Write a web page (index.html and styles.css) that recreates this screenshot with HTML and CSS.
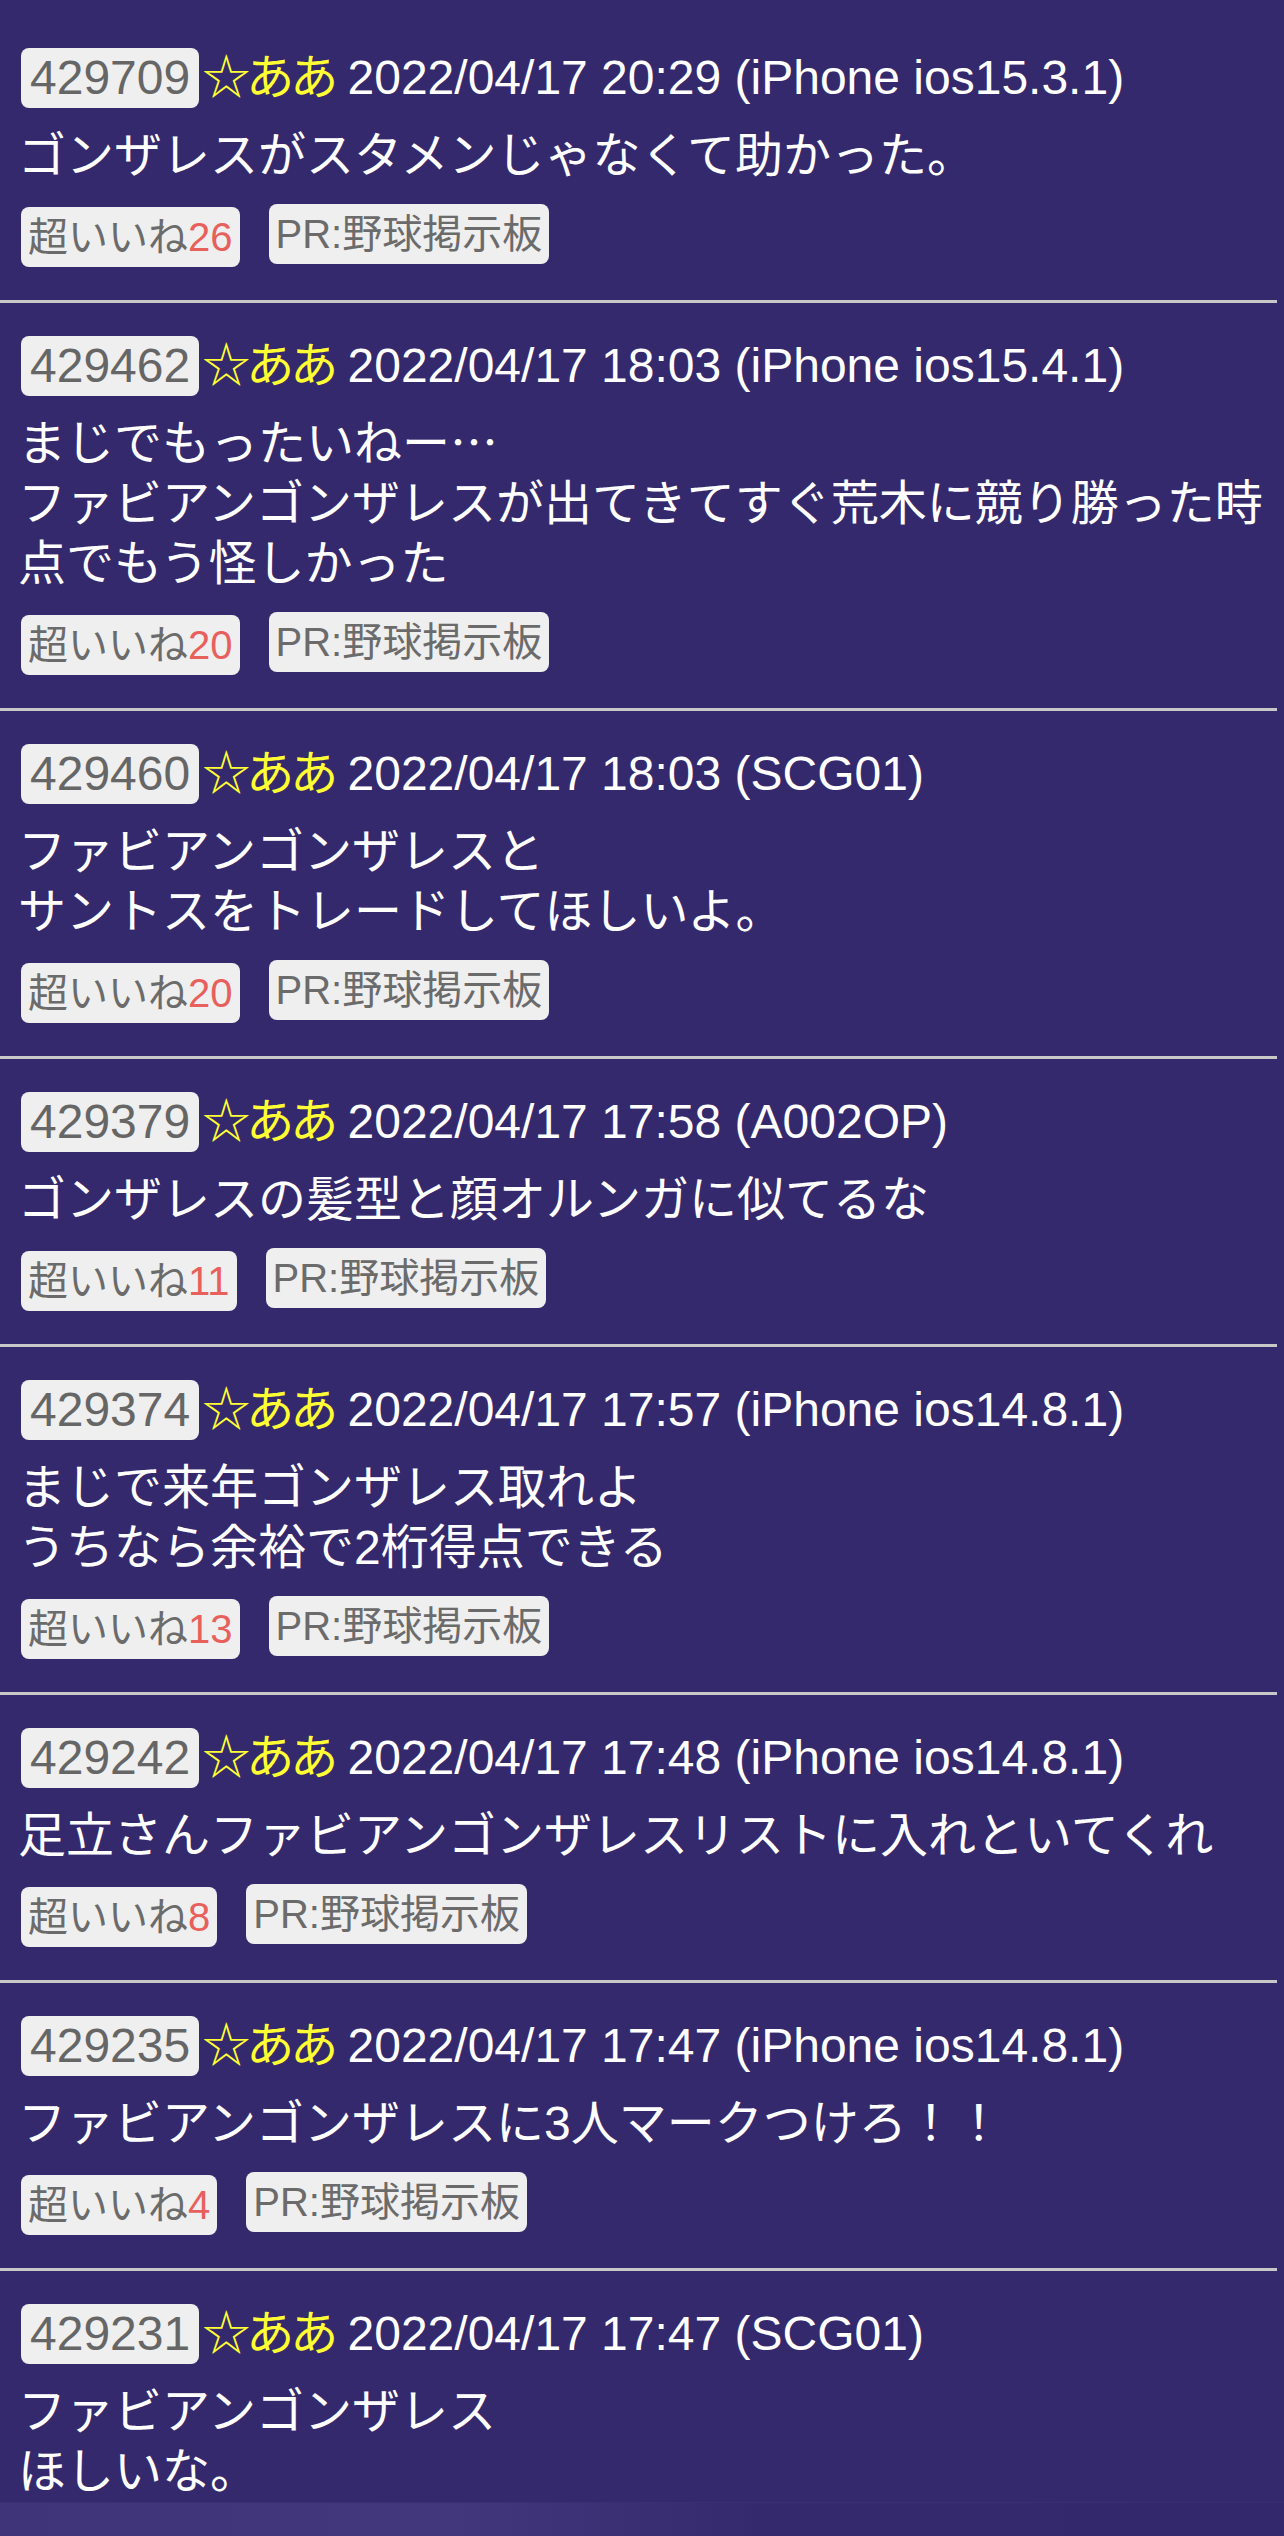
FILE: index.html
```html
<!DOCTYPE html>
<html lang="ja">
<head>
<meta charset="utf-8">
<title>掲示板</title>
<link rel="stylesheet" href="styles.css">
</head>
<body>
<div class="list">
  <div class="post">
    <div class="post-head"><span class="res-no">429709</span><span class="name">☆ああ</span> <span class="date">2022/04/17 20:29 (iPhone ios15.3.1)</span></div>
    <div class="post-body">ゴンザレスがスタメンじゃなくて助かった。</div>
    <div class="tags"><span class="tag like">超いいね<span class="count">26</span></span><span class="tag">PR:野球掲示板</span></div>
  </div>
  <div class="post">
    <div class="post-head"><span class="res-no">429462</span><span class="name">☆ああ</span> <span class="date">2022/04/17 18:03 (iPhone ios15.4.1)</span></div>
    <div class="post-body">まじでもったいねー<span class="cjk">…</span><br>ファビアンゴンザレスが出てきてすぐ荒木に競り勝った時点でもう怪しかった</div>
    <div class="tags"><span class="tag like">超いいね<span class="count">20</span></span><span class="tag">PR:野球掲示板</span></div>
  </div>
  <div class="post">
    <div class="post-head"><span class="res-no">429460</span><span class="name">☆ああ</span> <span class="date">2022/04/17 18:03 (SCG01)</span></div>
    <div class="post-body">ファビアンゴンザレスと<br>サントスをトレードしてほしいよ。</div>
    <div class="tags"><span class="tag like">超いいね<span class="count">20</span></span><span class="tag">PR:野球掲示板</span></div>
  </div>
  <div class="post">
    <div class="post-head"><span class="res-no">429379</span><span class="name">☆ああ</span> <span class="date">2022/04/17 17:58 (A002OP)</span></div>
    <div class="post-body">ゴンザレスの髪型と顔オルンガに似てるな</div>
    <div class="tags"><span class="tag like">超いいね<span class="count">11</span></span><span class="tag">PR:野球掲示板</span></div>
  </div>
  <div class="post">
    <div class="post-head"><span class="res-no">429374</span><span class="name">☆ああ</span> <span class="date">2022/04/17 17:57 (iPhone ios14.8.1)</span></div>
    <div class="post-body">まじで来年ゴンザレス取れよ<br>うちなら余裕で2桁得点できる</div>
    <div class="tags"><span class="tag like">超いいね<span class="count">13</span></span><span class="tag">PR:野球掲示板</span></div>
  </div>
  <div class="post">
    <div class="post-head"><span class="res-no">429242</span><span class="name">☆ああ</span> <span class="date">2022/04/17 17:48 (iPhone ios14.8.1)</span></div>
    <div class="post-body">足立さんファビアンゴンザレスリストに入れといてくれ</div>
    <div class="tags"><span class="tag like">超いいね<span class="count">8</span></span><span class="tag">PR:野球掲示板</span></div>
  </div>
  <div class="post">
    <div class="post-head"><span class="res-no">429235</span><span class="name">☆ああ</span> <span class="date">2022/04/17 17:47 (iPhone ios14.8.1)</span></div>
    <div class="post-body">ファビアンゴンザレスに3人マークつけろ！！</div>
    <div class="tags"><span class="tag like">超いいね<span class="count">4</span></span><span class="tag">PR:野球掲示板</span></div>
  </div>
  <div class="post last">
    <div class="post-head"><span class="res-no">429231</span><span class="name">☆ああ</span> <span class="date">2022/04/17 17:47 (SCG01)</span></div>
    <div class="post-body">ファビアンゴンザレス<br>ほしいな。</div>
  </div>
</div>
<div class="toolbar"></div>
</body>
</html>
```
FILE: styles.css
```css
html, body {
  margin: 0;
  padding: 0;
}

body {
  background: #35296e;
  color: #ffffff;
  font-family: "Liberation Sans", "Noto Sans CJK JP", sans-serif;
  font-size: 48px;
  overflow: hidden;
  height: 2536px;
}

.cjk {
  font-family: "Noto Sans CJK JP", sans-serif;
  line-height: 0;
}

.list {
  padding-top: 15px;
  margin-right: 7px;
}

.post {
  padding: 33px 0 33px 18px;
  border-bottom: 3px solid #c8c8c8;
}

.post.last {
  border-bottom: none;
}

.post-head {
  height: 60px;
  line-height: 60px;
  white-space: nowrap;
}

.res-no {
  display: inline-block;
  height: 60px;
  margin-left: 3px;
  padding: 0 9px;
  background: #efefef;
  color: #666666;
  border-radius: 8px;
}

.name {
  color: #ffff33;
  margin-left: 3px;
  letter-spacing: -4px;
}

.post-body {
  margin-top: 18px;
  line-height: 60px;
}

.tags {
  display: flex;
  align-items: flex-start;
  gap: 29px;
  margin-top: 18px;
  margin-left: 3px;
}

.tag {
  display: block;
  height: 60px;
  line-height: 60px;
  padding: 0 7px;
  font-size: 40px;
  background: #efefef;
  color: #6b6b6b;
  border-radius: 8px;
}

.tag.like {
  margin-top: 3px;
}

.count {
  color: #e8605c;
}

.toolbar {
  position: fixed;
  left: 0;
  right: 0;
  bottom: 0;
  height: 33px;
  background: linear-gradient(90deg, #3f3479 0%, #42377c 35%, #35296e 60%, #33286c 100%);
  border-top: 1px solid #3a2f72;
}
```
